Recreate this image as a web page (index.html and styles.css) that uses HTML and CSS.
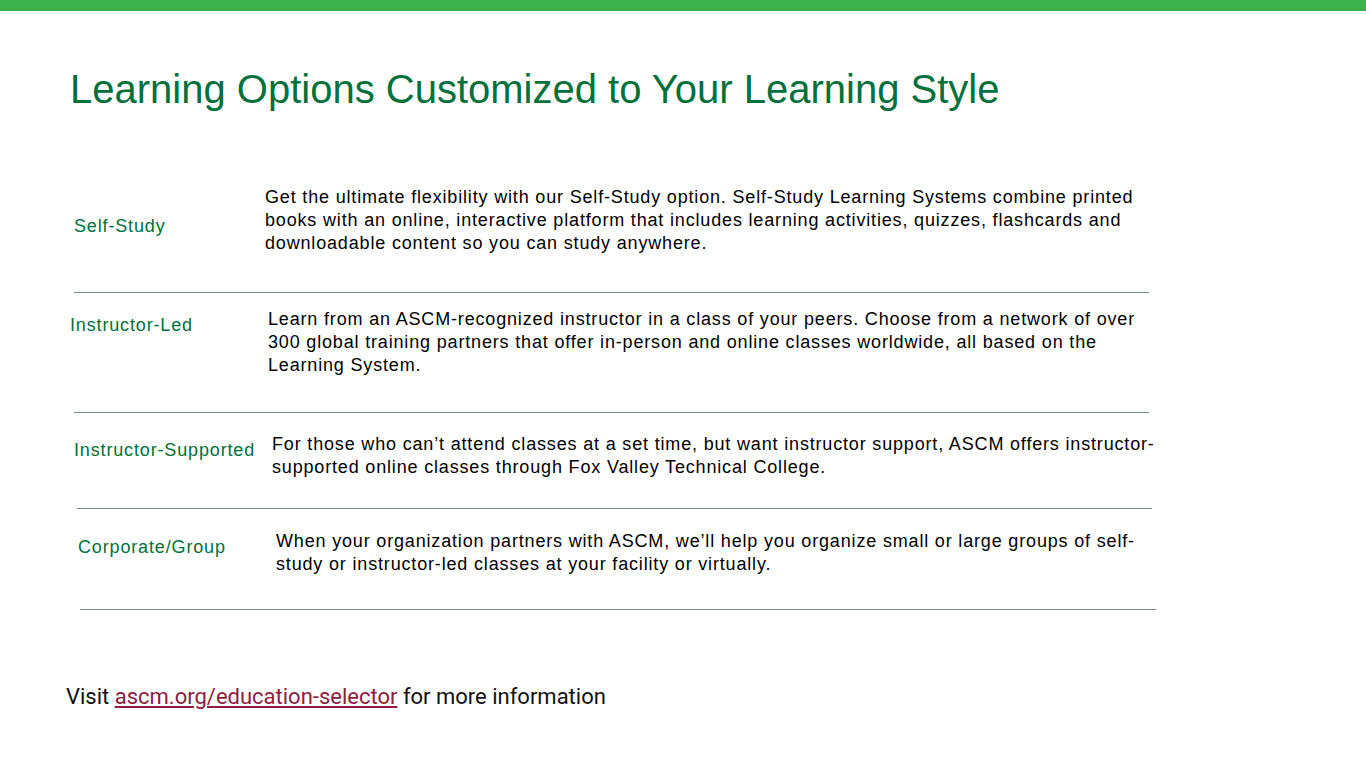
FILE: index.html
```html
<!DOCTYPE html>
<html lang="en">
<head>
<meta charset="utf-8">
<title>Learning Options</title>
<link rel="stylesheet" href="styles.css">
</head>
<body>
<div class="topbar"></div>
<h1 class="title">Learning Options Customized to Your Learning Style</h1>
<div class="options">
  <div class="row row-1">
    <div class="label">Self-Study</div>
    <div class="desc">Get the ultimate flexibility with our Self-Study option. Self-Study Learning Systems combine printed books with an online, interactive platform that includes learning activities, quizzes, flashcards and downloadable content so you can study anywhere.</div>
  </div>
  <div class="row row-2">
    <div class="label">Instructor-Led</div>
    <div class="desc">Learn from an ASCM-recognized instructor in a class of your peers. Choose from a network of over 300 global training partners that offer in-person and online classes worldwide, all based on the Learning System.</div>
  </div>
  <div class="row row-3">
    <div class="label">Instructor-Supported</div>
    <div class="desc">For those who can’t attend classes at a set time, but want instructor support, ASCM offers instructor-supported online classes through Fox Valley Technical College.</div>
  </div>
  <div class="row row-4">
    <div class="label">Corporate/Group</div>
    <div class="desc">When your organization partners with ASCM, we’ll help you organize small or large groups of self-study or instructor-led classes at your facility or virtually.</div>
  </div>
</div>
<p class="footer">Visit <a href="#" class="link">ascm.org/education-selector</a> for more information</p>
</body>
</html>
```
FILE: styles.css
```css
* { box-sizing: border-box; }
html, body { margin: 0; padding: 0; background: #fff; }
body {
  width: 1366px;
  height: 768px;
  overflow: hidden;
  font-family: "Liberation Sans", Arial, sans-serif;
  color: #000;
}
.topbar {
  height: 11px;
  background: #3db14b;
}
.title {
  margin: 55px 0 0 70px;
  font-size: 40px;
  line-height: 46px;
  font-weight: normal;
  color: #00703c;
}
.options {
  margin-top: 74px;
  display: flex;
  flex-direction: column;
}
.row {
  display: flex;
  width: 1075px;
  border-bottom: 1px solid #7d8891;
}
.label {
  flex: none;
  font-size: 18px;
  letter-spacing: 0.85px;
  line-height: 23px;
  color: #00703c;
  white-space: nowrap;
}
.desc {
  flex: none;
  font-size: 18px;
  letter-spacing: 0.83px;
  line-height: 23px;
  width: 900px;
}
.row-1 { margin-left: 74px; height: 107px; }
.row-1 .label { width: 191px; padding-top: 29px; }
.row-2 { margin-left: 74px; height: 120px; padding-top: 15px; }
.row-2 .label { width: 198px; margin-left: -4px; padding-top: 6px; }
.row-3 { margin-left: 77px; height: 96px; padding-top: 20px; }
.row-3 .label { width: 198px; margin-left: -3px; padding-top: 6px; }
.row-4 { margin-left: 80px; height: 101px; padding-top: 21px; width: 1076px; }
.row-4 .label { width: 198px; margin-left: -2px; padding-top: 6px; }
.footer {
  margin: 74px 0 0 66px;
  font-family: Roboto, "Liberation Sans", sans-serif;
  font-size: 22px;
  line-height: 26px;
  color: #111;
}
.link {
  color: #8c1d3f;
  text-decoration: underline;
}
```
